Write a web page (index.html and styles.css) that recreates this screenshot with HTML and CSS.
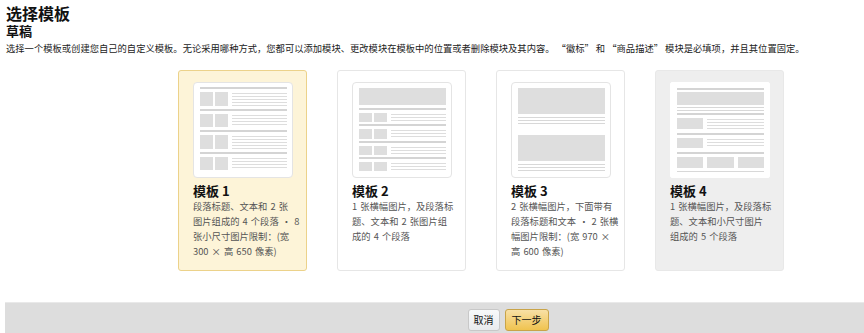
FILE: index.html
```html
<!DOCTYPE html>
<html lang="zh-CN">
<head>
<meta charset="utf-8">
<title>选择模板</title>
<link rel="stylesheet" href="styles.css">
</head>
<body>
<div class="page">
  <header class="head">
    <h1 class="title">选择模板</h1>
    <h2 class="subtitle">草稿</h2>
    <p class="intro">选择一个模板或创建您自己的自定义模板。无论采用哪种方式，您都可以添加模块、更改模块在模板中的位置或者删除模块及其内容。 “徽标” 和 “商品描述” 模块是必填项，并且其位置固定。</p>
  </header>

  <div class="cards">
    <div class="card selected">
      <div class="thumb">
        <div class="row r1"><span class="sq"></span><span class="sq"></span><span class="txt"></span></div>
        <div class="row r1"><span class="sq"></span><span class="sq"></span><span class="txt"></span></div>
        <div class="row r1"><span class="sq"></span><span class="sq"></span><span class="txt"></span></div>
        <div class="row r1"><span class="sq"></span><span class="sq"></span><span class="txt"></span></div>
      </div>
      <div class="name">模板 1</div>
      <div class="desc">段落标题、文本和 2 张<br>图片组成的 4 个段落 • 8<br>张小尺寸图片限制：(宽<br>300 × 高 650 像素)</div>
    </div>

    <div class="card">
      <div class="thumb">
        <div class="banner b2"></div>
        <div class="row r2"><span class="sq"></span><span class="sq"></span><span class="txt"></span></div>
        <div class="row r2"><span class="sq"></span><span class="sq"></span><span class="txt"></span></div>
        <div class="row r2"><span class="sq"></span><span class="sq"></span><span class="txt"></span></div>
        <div class="row r2"><span class="sq"></span><span class="sq"></span><span class="txt"></span></div>
      </div>
      <div class="name">模板 2</div>
      <div class="desc">1 张横幅图片，及段落标<br>题、文本和 2 张图片组<br>成的 4 个段落</div>
    </div>

    <div class="card">
      <div class="thumb">
        <div class="banner b3"></div>
        <div class="lines l3"></div>
        <div class="banner b3 second"></div>
        <div class="lines l3"></div>
      </div>
      <div class="name">模板 3</div>
      <div class="desc">2 张横幅图片，下面带有<br>段落标题和文本 • 2 张横<br>幅图片限制：(宽 970 ×<br>高 600 像素)</div>
    </div>

    <div class="card grey">
      <div class="thumb">
        <div class="rule"></div>
        <div class="banner b4"></div>
        <div class="lines l4"></div>
        <div class="row r4"><span class="sq wide"></span><span class="txt"></span></div>
        <div class="row r4"><span class="sq wide"></span><span class="txt"></span></div>
        <div class="row r4 three"><span class="sq"></span><span class="sq"></span><span class="sq"></span></div>
        <div class="lines l4b"></div>
      </div>
      <div class="name">模板 4</div>
      <div class="desc">1 张横幅图片，及段落标<br>题、文本和小尺寸图片<br>组成的 5 个段落</div>
    </div>
  </div>

  <footer class="bar">
    <button class="btn cancel">取消</button>
    <button class="btn next">下一步</button>
  </footer>
</div>
</body>
</html>
```

FILE: styles.css
```css
html, body {
  margin: 0;
  padding: 0;
  background: #ffffff;
}

body {
  font-family: "Noto Sans CJK SC", "Liberation Sans", sans-serif;
  color: #111111;
  overflow: hidden;
}

.page {
  width: 864px;
  height: 333px;
  display: flex;
  flex-direction: column;
}

.head {
  padding: 4px 6px 0 6px;
}

.title {
  margin: 0;
  font-size: 16px;
  line-height: 18px;
  font-weight: 700;
}

.subtitle {
  margin: 1px 0 0 0;
  font-size: 13px;
  line-height: 15px;
  font-weight: 700;
}

.intro {
  margin: 3px 0 0 0;
  font-size: 9.3px;
  line-height: 14px;
  color: #222222;
  white-space: nowrap;
}

.cards {
  display: flex;
  gap: 30px;
  padding-left: 178px;
  margin-top: 15px;
}

.card {
  box-sizing: border-box;
  width: 129px;
  height: 201px;
  padding: 11px 13px 0 14px;
  border: 1px solid #e6e6e6;
  border-radius: 3px;
  background: #ffffff;
}

.card.selected {
  background: #fdf4d8;
  border-color: #ecd28a;
}

.card.grey {
  background: #eeeeee;
  border-color: #e8e8e8;
}

.thumb {
  box-sizing: border-box;
  width: 100px;
  height: 96px;
  background: #ffffff;
  border: 1px solid #e4e4e4;
  border-radius: 4px;
  padding: 4px 5px 4px 6px;
  display: flex;
  flex-direction: column;
}

.card.grey .thumb {
  border-color: #ffffff;
  border-radius: 2px;
}

.row {
  display: flex;
  gap: 2px;
  border-top: 2px solid #d4d4d4;
  padding-top: 3px;
}

.r1 {
  flex: 1;
  padding-bottom: 3px;
}

.r2 {
  flex: 1;
  padding-bottom: 2px;
}

.sq {
  width: 13px;
  background: #dedede;
}

.sq.wide {
  width: 26px;
}

.txt {
  flex: 1;
  margin-left: 2px;
  margin-top: 1px;
  background: repeating-linear-gradient(to bottom, #dddddd 0, #dddddd 1px, transparent 1px, transparent 3px);
}

.banner {
  background: #dedede;
}

.b2 {
  height: 17px;
  margin-top: 1px;
  margin-bottom: 3px;
}

.b3 {
  height: 26px;
  margin-top: 1px;
}

.b3.second {
  margin-top: 10px;
}

.lines {
  background: repeating-linear-gradient(to bottom, #d8d8d8 0, #d8d8d8 1px, transparent 1px, transparent 3px);
}

.l3 {
  height: 8px;
  margin-top: 3px;
}

.rule {
  height: 2px;
  background: #d4d4d4;
  margin-top: 1px;
}

.b4 {
  height: 17px;
  margin-top: 2px;
}

.l4 {
  height: 5px;
  margin-top: 2px;
}

.r4 {
  height: 13px;
  margin-top: 2px;
  padding-bottom: 2px;
}

.r4.three {
  gap: 4px;
}

.r4.three .sq {
  flex: 1;
  width: auto;
}

.l4b {
  height: 3px;
  margin-top: 1px;
}

.name {
  margin-top: 5px;
  font-size: 13px;
  line-height: 16px;
  font-weight: 700;
  color: #111111;
}

.desc {
  width: 106px;
  font-size: 9.3px;
  line-height: 15px;
  word-spacing: 1px;
  color: #555555;
  white-space: nowrap;
}

.bar {
  margin-top: auto;
  margin-left: 5px;
  height: 31px;
  box-sizing: border-box;
  background: #dddddd;
  border-top: 1px solid #e9e9e9;
  display: flex;
  justify-content: center;
  align-items: flex-start;
  gap: 5px;
  padding: 6px 0 0 147px;
}

.btn {
  height: 22px;
  box-sizing: border-box;
  font-family: "Noto Sans CJK SC", "Liberation Sans", sans-serif;
  font-size: 10px;
  line-height: 20px;
  color: #111111;
  border-radius: 3px;
  padding: 0;
  cursor: pointer;
}

.cancel {
  width: 32px;
  background: linear-gradient(#f8f9fa, #e9ebee);
  border: 1px solid #c8c8c8;
}

.next {
  width: 44px;
  background: linear-gradient(#f8e0a6, #f0c34f);
  border: 1px solid #c9a448;
}
```
